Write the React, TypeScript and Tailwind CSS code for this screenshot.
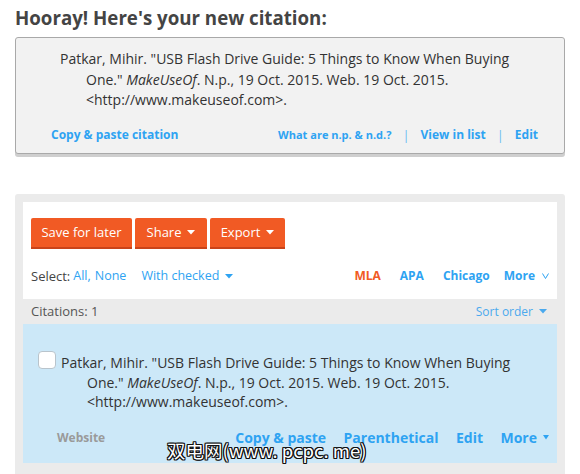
import React from "react";

const Caret = ({ color = "#2ea3f2", w = 8 }: { color?: string; w?: number }) => (
  <svg width={w} height="5" viewBox="0 0 8 5" preserveAspectRatio="none" className="inline-block" style={{ verticalAlign: "middle" }}>
    <path d="M0 0 L8 0 L4 4.5 Z" fill={color} />
  </svg>
);

const Citation = () => (
  <>
    Patkar, Mihir. "USB Flash Drive Guide: 5 Things to Know When Buying One." <i>MakeUseOf</i>. N.p., 19 Oct. 2015. Web. 19 Oct. 2015.
    &lt;http://www.makeuseof.com&gt;.
  </>
);

export default function App() {
  return (
    <div
      className="relative w-[580px] h-[474px] overflow-hidden bg-white"
      style={{ fontFamily: '"Open Sans", "Noto Sans", sans-serif' }}
    >
      <h1 className="pl-[15px] pt-[6px] text-[18.7px] leading-[24px] font-bold text-[#444]">
        Hooray! Here's your new citation:
      </h1>

      <div className="mx-[15px] mt-[7px] h-[117px] rounded-[3px] border border-[#a9a9a9] bg-[#f2f2f2] shadow-[0_3px_0_#cfcfcf] pt-[11px] pr-[25px]">
        <p className="pl-[70px] pr-[20px] -indent-[26px] text-[14px] leading-[20.5px] text-[#333]">
          <Citation />
        </p>
        <div className="mt-[15px] flex items-center justify-between pl-[35px] font-bold text-[#2ea3f2]">
          <span className="text-[12px] leading-[18px]">Copy &amp; paste citation</span>
          <div className="flex items-center gap-[11px]">
            <span className="text-[11px] leading-[18px]">What are n.p. &amp; n.d.?</span>
            <span className="text-[13px] font-normal text-[#6cbcf2]">|</span>
            <span className="text-[12px] leading-[18px]">View in list</span>
            <span className="text-[13px] font-normal text-[#6cbcf2]">|</span>
            <span className="text-[12px] leading-[18px] pr-[1px]">Edit</span>
          </div>
        </div>
      </div>

      <div className="mx-[15px] mt-[40px] h-[300px] rounded-[3px] bg-[#ebebeb] px-[8px] pt-[8px]">
        <div className="bg-white px-[8px] pt-[16px] pb-[14px]">
          <div className="flex gap-[3px]">
            <button className="h-[31px] w-[101px] rounded-t-[2px] border-b-2 border-[#c9431a] bg-[#f15a24] text-[13px] text-white">
              Save for later
            </button>
            <button className="flex h-[31px] w-[72px] items-center justify-center gap-[6px] rounded-t-[2px] border-b-2 border-[#c9431a] bg-[#f15a24] text-[13px] text-white">
              Share <Caret color="#fff" />
            </button>
            <button className="flex h-[31px] w-[75px] items-center justify-center gap-[6px] rounded-t-[2px] border-b-2 border-[#c9431a] bg-[#f15a24] text-[13px] text-white">
              Export <Caret color="#fff" />
            </button>
          </div>
          <div className="mt-[18px] flex items-center justify-between text-[13px] leading-[18px]">
            <div className="flex items-center">
              <span className="text-[#444]">Select:</span>
              <span className="ml-[3px] text-[12.5px] text-[#2ea3f2]">All,</span>
              <span className="ml-[4px] text-[12.5px] text-[#2ea3f2]">None</span>
              <span className="ml-[15px] flex items-center gap-[6px] text-[12.5px] text-[#2ea3f2]">
                With checked <Caret />
              </span>
            </div>
            <div className="flex items-center text-[12px] font-bold text-[#2ea3f2]">
              <span className="text-[#f15a24]">MLA</span>
              <span className="ml-[19px]">APA</span>
              <span className="ml-[19px]">Chicago</span>
              <span className="ml-[14px] flex items-center gap-[7px]">
                More
                <svg width="7" height="6" viewBox="0 0 7 6">
                  <path d="M0.5 0.5 L3.5 5.5 L6.5 0.5" fill="none" stroke="#2ea3f2" strokeWidth="1" />
                </svg>
              </span>
            </div>
          </div>
        </div>

        <div className="flex h-[25px] items-center justify-between pl-[8px] pr-[10px] text-[13px]">
          <span className="text-[#555]">Citations: 1</span>
          <span className="flex items-center gap-[6px] text-[12px] text-[#4aa9ee]">
            Sort order <Caret color="#4aa9ee" />
          </span>
        </div>

        <div className="bg-[#cce8f8] pl-[15px] pr-[8px] pt-[29px] h-[139px]">
          <div className="flex">
            <div className="h-[18px] w-[18px] shrink-0 rounded-[4px] border border-[#b9c4cc] bg-white -mt-[2px]" />
            <p className="ml-[5px] pl-[26px] pr-[30px] -indent-[26px] text-[14px] leading-[19.6px] text-[#333]">
              <Citation />
            </p>
          </div>
          <div className="mt-[17px] flex items-center justify-between pl-[19px] leading-[18px]">
            <span className="text-[12px] font-bold text-[#9a9a9a]">Website</span>
            <div className="flex items-center gap-[17.5px] text-[14px] font-bold text-[#2ea3f2]">
              <span>Copy &amp; paste</span>
              <span>Parenthetical</span>
              <span>Edit</span>
              <span className="flex items-center gap-[6px]">
                More <Caret w={6} />
              </span>
            </div>
          </div>
        </div>
      </div>

      <div
        className="absolute left-[167px] top-[438px] text-[18.5px] leading-[24px] text-white whitespace-nowrap"
        style={{
          fontFamily: '"Noto Sans CJK SC", "Liberation Sans", sans-serif',
          textShadow:
            "1px 0 0 #111, -1px 0 0 #111, 0 1px 0 #111, 0 -1px 0 #111, 1px 1px 0 #111, -1px -1px 0 #111, 1px -1px 0 #111, -1px 1px 0 #111",
        }}
      >
        双电网(www. pcpc. me)
      </div>
    </div>
  );
}
